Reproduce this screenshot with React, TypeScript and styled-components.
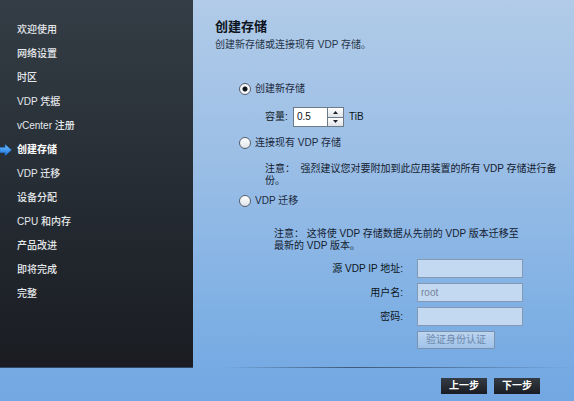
import React, { useState } from "react";
import styled, { createGlobalStyle } from "styled-components";

const GlobalStyle = createGlobalStyle`
  * { box-sizing: border-box; }
  body {
    margin: 0;
    color: #0c1420;
    font: 10px/12px "Liberation Sans", "Noto Sans CJK SC", sans-serif;
  }
  input, button { font: inherit; color: inherit; margin: 0; }
`;

const Page = styled.div`
  display: flex;
  flex-direction: column;
  min-height: 100vh;
  background: linear-gradient(#b1cbe8, #9cbfe6 38%, #7fb0e4 78%, #72a7e2);
`;

const Body = styled.div`
  display: flex;
  flex: 1;
`;

const Sidebar = styled.nav`
  flex: 0 0 193px;
  padding-top: 18px;
  border-bottom: 1px solid #2f4765;
  background: linear-gradient(#343d45, #262d35 50%, #1a1c21);
`;

const Steps = styled.ol`
  margin: 0;
  padding: 0;
  list-style: none;
`;

const Step = styled.li<{ $active: boolean }>`
  display: flex;
  align-items: center;
  height: 24px;
  color: ${(p) => (p.$active ? "#ffffff" : "#e6e9ec")};
  font-weight: ${(p) => (p.$active ? 700 : 500)};
`;

const Marker = styled.span`
  display: flex;
  flex: 0 0 17px;
`;

const Content = styled.main`
  flex: 1;
  min-width: 0;
  padding: 18px 14px 16px 22px;
`;

const Title = styled.h1`
  margin: 0;
  font-size: 13px;
  line-height: 18px;
  font-weight: 700;
`;

const Subtitle = styled.p`
  margin: 3px 0 0;
  color: #27364a;
`;

const Options = styled.div`
  padding: 31px 0 0 24px;
`;

const RadioLabel = styled.label`
  display: flex;
  align-items: center;
  gap: 4px;
  width: fit-content;
  height: 14px;
  color: #1c2a3e;
`;

const Radio = styled.input`
  appearance: none;
  width: 12px;
  height: 12px;
  border: 1px solid #56606c;
  border-radius: 50%;
  background: linear-gradient(#ffffff, #dfe3e8);
  &:checked {
    background: radial-gradient(circle, #10151c 0 2px, #f4f6f8 3px);
  }
`;

const Capacity = styled.div`
  display: flex;
  align-items: center;
  margin: 11px 0 9px 26px;
`;

const CapacityLabel = styled.label`
  width: 28px;
  color: #101a28;
`;

const Spinner = styled.div`
  display: flex;
  width: 51px;
  height: 20px;
  margin-right: 5px;
  border: 1px solid #6d7a89;
  background: #ffffff;
`;

const SpinnerInput = styled.input`
  flex: 1;
  min-width: 0;
  padding: 0 3px;
  border: 0;
  background: none;
`;

const SpinnerButtons = styled.div`
  display: flex;
  flex-direction: column;
  width: 16px;
  border-left: 1px solid #6d7a89;
`;

const SpinnerButton = styled.button`
  display: flex;
  flex: 1;
  align-items: center;
  justify-content: center;
  padding: 0;
  border: 0;
  background: linear-gradient(#ffffff, #dfe2e6);
  & + & { border-top: 1px solid #6d7a89; }
`;

const Note = styled.p<{ $indent: number; $width: number }>`
  max-width: ${(p) => p.$width}px;
  margin: 0 0 0 ${(p) => p.$indent}px;
  color: #14202f;
`;

const Section = styled.div<{ $top: number; $bottom: number }>`
  padding: ${(p) => p.$top}px 0 ${(p) => p.$bottom}px;
`;

const Fields = styled.div`
  display: grid;
  grid-template-columns: 164px 106px;
  gap: 5px 14px;
`;

const FieldLabel = styled.label`
  align-self: center;
  text-align: right;
  color: #0c1420;
`;

const Field = styled.input`
  width: 100%;
  height: 19px;
  padding: 0 3px;
  border: 1px solid #8499b3;
  border-radius: 0;
  background: #c3d9f1;
  color: #75849b;
`;

const VerifyButton = styled.button`
  grid-column: 2;
  width: 78px;
  height: 18px;
  padding: 0;
  border: 1px solid #7b92ae;
  border-radius: 1px;
  background: linear-gradient(#bdd5ef, #a0c2e9);
  color: #6c88aa;
`;

const Footer = styled.footer`
  display: flex;
  justify-content: flex-end;
  gap: 7px;
  padding: 10px 34px 7px 0;
`;

const Divider = styled.div`
  height: 1px;
  margin: -1px 0 0 193px;
  background: linear-gradient(90deg, transparent 8%, #3e597a 42%, #4d6f98 60%, transparent);
`;

const NavButton = styled.button`
  width: 46px;
  height: 16px;
  padding: 0;
  border: 0;
  background: linear-gradient(#353c45, #191c22);
  color: #ffffff;
  line-height: 16px;
  font-weight: 700;
`;

const steps = [
  "欢迎使用", "网络设置", "时区", "VDP 凭据", "vCenter 注册", "创建存储",
  "VDP 迁移", "设备分配", "CPU 和内存", "产品改进", "即将完成", "完整",
];
const current = "创建存储";

const ArrowIcon = () => (
  <svg width="12" height="12" viewBox="0 0 12 12" aria-hidden="true">
    <defs>
      <linearGradient id="arrow" x1="0" y1="0" x2="0" y2="1">
        <stop offset="0" stopColor="#76c2ff" />
        <stop offset="1" stopColor="#1672dc" />
      </linearGradient>
    </defs>
    <path d="M0 3.6H5.2V.6L11.4 6L5.2 11.4V8.4H0Z" fill="url(#arrow)" stroke="#2384e8" strokeWidth=".5" />
  </svg>
);

const Triangle = ({ d }: { d: string }) => (
  <svg width="5" height="3" viewBox="0 0 5 3" aria-hidden="true">
    <path d={d} fill="#1b222b" />
  </svg>
);

export default function App() {
  const [mode, setMode] = useState("new");
  const [capacity, setCapacity] = useState("0.5");
  const [user, setUser] = useState("root");
  const change = (by: number) =>
    setCapacity((v) => String(Math.max(0.5, (Number(v) || 0) + by)));
  const radio = (value: string, text: string) => (
    <RadioLabel>
      <Radio type="radio" name="mode" checked={mode === value} onChange={() => setMode(value)} />
      {text}
    </RadioLabel>
  );

  return (
    <Page lang="zh-CN">
      <GlobalStyle />
      <Body>
        <Sidebar>
          <Steps>
            {steps.map((name) => (
              <Step key={name} $active={name === current} aria-current={name === current ? "step" : undefined}>
                <Marker>{name === current && <ArrowIcon />}</Marker>
                {name}
              </Step>
            ))}
          </Steps>
        </Sidebar>
        <Content>
          <Title>创建存储</Title>
          <Subtitle>创建新存储或连接现有 VDP 存储。</Subtitle>
          <Options>
            {radio("new", "创建新存储")}
            <Capacity>
              <CapacityLabel htmlFor="capacity">容量:</CapacityLabel>
              <Spinner>
                <SpinnerInput id="capacity" value={capacity} onChange={(e) => setCapacity(e.target.value)} />
                <SpinnerButtons>
                  <SpinnerButton type="button" aria-label="+" onClick={() => change(0.5)}>
                    <Triangle d="M0 3L2.5 0L5 3Z" />
                  </SpinnerButton>
                  <SpinnerButton type="button" aria-label="-" onClick={() => change(-0.5)}>
                    <Triangle d="M0 0L2.5 3L5 0Z" />
                  </SpinnerButton>
                </SpinnerButtons>
              </Spinner>
              TiB
            </Capacity>
            {radio("attach", "连接现有 VDP 存储")}
            <Section $top={13} $bottom={7}>
              <Note $indent={26} $width={300}>
                {"注意：\u00a0 强烈建议您对要附加到此应用装置的所有 VDP 存储进行备份。"}
              </Note>
            </Section>
            {radio("migrate", "VDP 迁移")}
            <Section $top={20} $bottom={7}>
              <Note $indent={35} $width={250}>
                注意： 这将使 VDP 存储数据从先前的 VDP 版本迁移至最新的 VDP 版本。
              </Note>
            </Section>
            <Fields>
              <FieldLabel htmlFor="address">源 VDP IP 地址:</FieldLabel>
              <Field id="address" disabled />
              <FieldLabel htmlFor="user">用户名:</FieldLabel>
              <Field id="user" value={user} onChange={(e) => setUser(e.target.value)} disabled />
              <FieldLabel htmlFor="password">密码:</FieldLabel>
              <Field id="password" type="password" disabled />
              <VerifyButton type="button" disabled>验证身份认证</VerifyButton>
            </Fields>
          </Options>
        </Content>
      </Body>
      <Divider />
      <Footer>
        <NavButton type="button">上一步</NavButton>
        <NavButton type="button">下一步</NavButton>
      </Footer>
    </Page>
  );
}
